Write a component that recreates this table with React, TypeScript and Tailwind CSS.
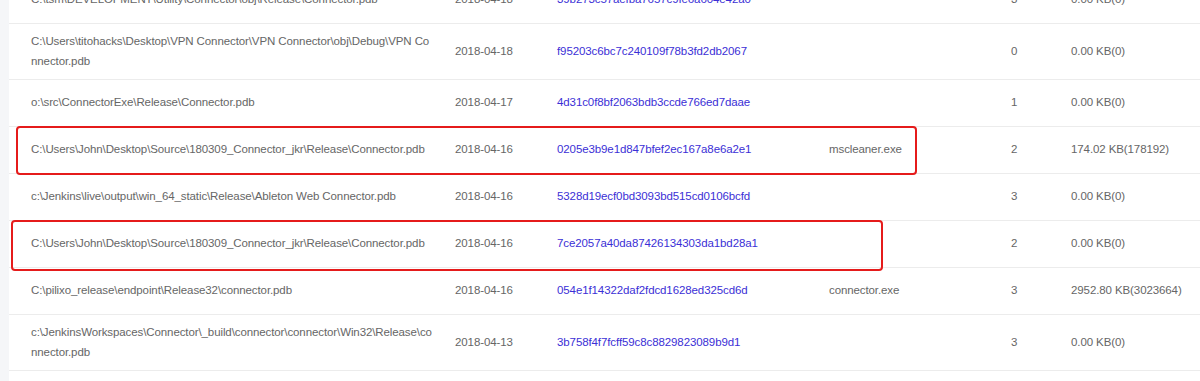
const rows = [
  {
    path: 'C:\\tsm\\DEVELOPMENT\\Utility\\Connector\\obj\\Release\\Connector.pdb',
    date: '2018-04-18',
    hash: '39b273c57aefba7657c9fe6a604e42a0',
    file: '',
    count: '3',
    size: '0.00 KB(0)',
  },
  {
    path: 'C:\\Users\\titohacks\\Desktop\\VPN Connector\\VPN Connector\\obj\\Debug\\VPN Connector.pdb',
    date: '2018-04-18',
    hash: 'f95203c6bc7c240109f78b3fd2db2067',
    file: '',
    count: '0',
    size: '0.00 KB(0)',
  },
  {
    path: 'o:\\src\\ConnectorExe\\Release\\Connector.pdb',
    date: '2018-04-17',
    hash: '4d31c0f8bf2063bdb3ccde766ed7daae',
    file: '',
    count: '1',
    size: '0.00 KB(0)',
  },
  {
    path: 'C:\\Users\\John\\Desktop\\Source\\180309_Connector_jkr\\Release\\Connector.pdb',
    date: '2018-04-16',
    hash: '0205e3b9e1d847bfef2ec167a8e6a2e1',
    file: 'mscleaner.exe',
    count: '2',
    size: '174.02 KB(178192)',
    mark: 'wide',
  },
  {
    path: 'c:\\Jenkins\\live\\output\\win_64_static\\Release\\Ableton Web Connector.pdb',
    date: '2018-04-16',
    hash: '5328d19ecf0bd3093bd515cd0106bcfd',
    file: '',
    count: '3',
    size: '0.00 KB(0)',
  },
  {
    path: 'C:\\Users\\John\\Desktop\\Source\\180309_Connector_jkr\\Release\\Connector.pdb',
    date: '2018-04-16',
    hash: '7ce2057a40da87426134303da1bd28a1',
    file: '',
    count: '2',
    size: '0.00 KB(0)',
    mark: 'narrow',
  },
  {
    path: 'C:\\pilixo_release\\endpoint\\Release32\\connector.pdb',
    date: '2018-04-16',
    hash: '054e1f14322daf2fdcd1628ed325cd6d',
    file: 'connector.exe',
    count: '3',
    size: '2952.80 KB(3023664)',
  },
  {
    path: 'c:\\JenkinsWorkspaces\\Connector\\_build\\connector\\connector\\Win32\\Release\\connector.pdb',
    date: '2018-04-13',
    hash: '3b758f4f7fcff59c8c8829823089b9d1',
    file: '',
    count: '3',
    size: '0.00 KB(0)',
  },
  {
    path: 'C:\\Users\\Build\\Desktop\\Connector\\Release\\Connector.pdb',
    date: '2018-04-12',
    hash: 'a1c07e3d52b98f04e6d1c3a7b2f90e58',
    file: '',
    count: '1',
    size: '0.00 KB(0)',
  },
];

export default function App() {
  return (
    <div
      className="h-[381px] bg-[#f5f6f8] pl-[9px] overflow-hidden"
      style={{ fontFamily: '"Liberation Sans", Arial, sans-serif' }}
    >
      <div className="bg-white mt-[-23px] text-[11.5px] tracking-[-0.1px] text-[#666666]">
        {rows.map((row, i) => (
          <div
            key={i}
            className="relative flex items-center min-h-[47px] border-b border-[#ececec]"
          >
            <div className="w-[432px] shrink-0 pl-[22px] pr-[7px] py-[8px] leading-[19.5px] break-all">
              {row.path}
            </div>
            <div className="w-[102px] shrink-0 pl-[14px]">{row.date}</div>
            <div className="w-[272px] shrink-0 pl-[14px]">
              <a className="text-[#3b2fd6] cursor-pointer">{row.hash}</a>
            </div>
            <div className="w-[182px] shrink-0 pl-[14px]">{row.file}</div>
            <div className="w-[60px] shrink-0 pl-[14px]">{row.count}</div>
            <div className="flex-1 pl-[14px]">{row.size}</div>

            {row.mark === 'wide' && (
              <div className="absolute left-[7px] top-[-1px] w-[901px] h-[49px] border-2 border-[#e51b1b] rounded-[4px] pointer-events-none" />
            )}
            {row.mark === 'narrow' && (
              <div className="absolute left-[2px] top-[-1px] w-[872px] h-[51px] border-2 border-[#e51b1b] rounded-[4px] pointer-events-none" />
            )}
          </div>
        ))}
      </div>
    </div>
  );
}
